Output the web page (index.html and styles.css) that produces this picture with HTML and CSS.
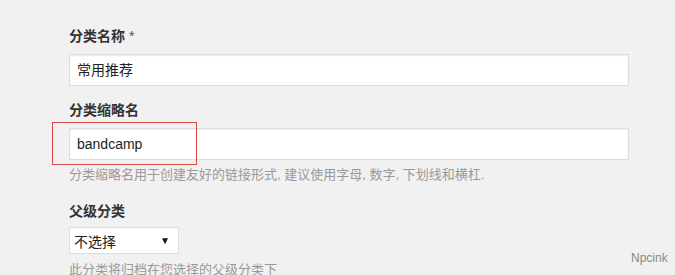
FILE: index.html
```html
<!DOCTYPE html>
<html lang="zh-CN">
<head>
<meta charset="utf-8">
<title>分类</title>
<link rel="stylesheet" href="styles.css">
</head>
<body>
<div class="page">
  <form class="form">
    <div class="field">
      <label class="label">分类名称 <span class="req">*</span></label>
      <div class="input">常用推荐</div>
    </div>
    <div class="field">
      <label class="label">分类缩略名</label>
      <div class="input">bandcamp</div>
      <p class="desc">分类缩略名用于创建友好的链接形式, 建议使用字母, 数字, 下划线和横杠.</p>
    </div>
    <div class="field field-last">
      <label class="label">父级分类</label>
      <div class="select"><span>不选择</span><span class="arrow">▼</span></div>
      <p class="desc">此分类将归档在您选择的父级分类下</p>
    </div>
  </form>
  <div class="highlight"></div>
  <div class="watermark">Npcink</div>
</div>
</body>
</html>
```
FILE: styles.css
```css
html, body {
  margin: 0;
  padding: 0;
  background: #f1f1f1;
  overflow: hidden;
}
.page {
  position: relative;
  width: 675px;
  height: 275px;
  font-family: "Liberation Sans", "Noto Sans CJK SC", sans-serif;
  color: #333;
}
.form {
  margin: 0;
  padding: 26px 0 0 69px;
  display: flex;
  flex-direction: column;
}
.field {
  display: flex;
  flex-direction: column;
  align-items: flex-start;
}
.field + .field {
  margin-top: 14px;
}
.field-last {
  margin-top: 16px !important;
}
.label {
  font-size: 14px;
  font-weight: bold;
  line-height: 20px;
  color: #333;
  margin-bottom: 8px;
}
.req {
  font-weight: normal;
  color: #555;
}
.field-last .label {
  margin-bottom: 6px;
}
.input {
  box-sizing: border-box;
  width: 560px;
  height: 32px;
  background: #fff;
  border: 1px solid #ddd;
  box-shadow: inset 0 1px 2px rgba(0,0,0,0.07);
  padding: 0 7px;
  font-size: 14px;
  line-height: 30px;
  color: #222;
}
.desc {
  margin: 5px 0 0;
  font-size: 13px;
  line-height: 20px;
  color: #999;
}
.field-last .desc {
  margin-top: 6px;
}
.select {
  box-sizing: border-box;
  width: 110px;
  height: 27px;
  background: #fff;
  border: 1px solid #ddd;
  display: flex;
  align-items: center;
  justify-content: space-between;
  padding: 0 8px 0 4px;
  font-size: 14px;
  color: #222;
}
.arrow {
  font-size: 10px;
  color: #111;
}
.highlight {
  position: absolute;
  left: 52px;
  top: 122px;
  width: 143px;
  height: 41px;
  border: 1px solid #d24b47;
}
.watermark {
  position: absolute;
  left: 631px;
  top: 250px;
  font-size: 12px;
  line-height: 16px;
  color: #888;
}
```
